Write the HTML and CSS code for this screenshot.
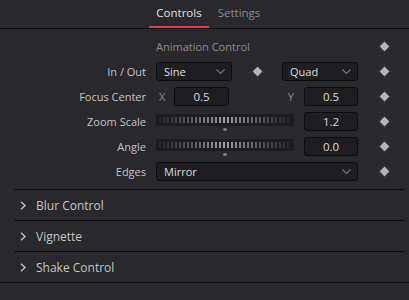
FILE: index.html
```html
<!DOCTYPE html>
<html>
<head>
<meta charset="utf-8">
<link rel="stylesheet" href="styles.css">
</head>
<body>
<div class="tabs">
  <div class="tab active">Controls</div>
  <div class="tab">Settings</div>
</div>
<div class="controls">
  <div class="row">
    <div class="label"></div>
    <div class="heading">Animation Control</div>
    <div class="key"><span class="diamond"></span></div>
  </div>
  <div class="row">
    <div class="label">In / Out</div>
    <div class="pair">
      <div class="select"><span>Sine</span><svg class="chev" width="9" height="6" viewBox="0 0 9 6"><polyline points="0.5,0.5 4.5,4.5 8.5,0.5"/></svg></div>
      <div class="key"><span class="diamond"></span></div>
      <div class="select"><span>Quad</span><svg class="chev" width="9" height="6" viewBox="0 0 9 6"><polyline points="0.5,0.5 4.5,4.5 8.5,0.5"/></svg></div>
    </div>
    <div class="key"><span class="diamond"></span></div>
  </div>
  <div class="row">
    <div class="label">Focus Center</div>
    <div class="xy">
      <div class="axis x">X</div>
      <div class="field">0.5</div>
      <div class="axis y">Y</div>
      <div class="field">0.5</div>
    </div>
    <div class="key"><span class="diamond"></span></div>
  </div>
  <div class="row">
    <div class="label">Zoom Scale</div>
    <div class="slide">
      <div class="slider"><div class="track"><div class="ticks"></div></div><div class="dot"></div></div>
      <div class="field">1.2</div>
    </div>
    <div class="key"><span class="diamond"></span></div>
  </div>
  <div class="row">
    <div class="label">Angle</div>
    <div class="slide">
      <div class="slider"><div class="track"><div class="ticks"></div></div><div class="dot"></div></div>
      <div class="field">0.0</div>
    </div>
    <div class="key"><span class="diamond"></span></div>
  </div>
  <div class="row">
    <div class="label">Edges</div>
    <div class="select"><span>Mirror</span><svg class="chev" width="9" height="6" viewBox="0 0 9 6"><polyline points="0.5,0.5 4.5,4.5 8.5,0.5"/></svg></div>
    <div class="key"><span class="diamond"></span></div>
  </div>
</div>
<div class="sections">
  <div class="section"><svg class="arrow" width="7" height="9" viewBox="0 0 7 9"><polyline points="1,0.8 5,4.5 1,8.2"/></svg><span>Blur Control</span></div>
  <div class="section"><svg class="arrow" width="7" height="9" viewBox="0 0 7 9"><polyline points="1,0.8 5,4.5 1,8.2"/></svg><span>Vignette</span></div>
  <div class="section"><svg class="arrow" width="7" height="9" viewBox="0 0 7 9"><polyline points="1,0.8 5,4.5 1,8.2"/></svg><span>Shake Control</span></div>
</div>
</body>
</html>
```

FILE: styles.css
```css
* { box-sizing: border-box; }
html, body {
  margin: 0;
  background: #28282d;
  height: 100%;
}
body {
  font-family: "Open Sans", "Noto Sans", sans-serif;
  font-size: 11px;
  color: #c4c4c4;
  overflow: hidden;
}
.tabs {
  display: flex;
  justify-content: center;
  padding-left: 9px;
  height: 29px;
  border-bottom: 1px solid #0e0e11;
}
.tab {
  width: 60px;
  height: 28px;
  line-height: 26px;
  text-align: center;
  color: #8c8c8f;
  font-size: 11.5px;
}
.tab.active {
  color: #e2e2e2;
  border-bottom: 2px solid #cf4a3c;
}
.controls {
  padding-top: 8px;
  display: flex;
  flex-direction: column;
  gap: 6px;
}
.row {
  display: grid;
  grid-template-columns: 146px 202px 32px;
  column-gap: 10px;
  height: 19px;
  align-items: center;
}
.label {
  text-align: right;
  color: #c4c4c6;
  line-height: 19px;
}
.heading {
  color: #8d8d90;
  line-height: 19px;
}
.key {
  display: flex;
  justify-content: center;
  align-items: center;
  height: 19px;
}
.diamond {
  width: 9px;
  height: 9px;
  background: #b4b4b6;
  border: 1px solid #141416;
  transform: rotate(45deg);
}
.pair {
  display: grid;
  grid-template-columns: 76px 1fr 76px;
  height: 19px;
}
.select {
  height: 19px;
  background: #1e1e21;
  border: 1px solid #0d0d0f;
  border-radius: 3px;
  display: flex;
  align-items: center;
  justify-content: space-between;
  padding: 0 6px 0 7px;
  color: #dcdcdc;
}
.chev {
  fill: none;
  stroke: #77777a;
  stroke-width: 1.1;
}
.xy {
  display: grid;
  grid-template-columns: 18px 55px 1fr 54px;
  height: 19px;
  align-items: center;
}
.axis {
  color: #8a8a8d;
  line-height: 19px;
}
.axis.x { padding-left: 3px; }
.axis.y { text-align: right; padding-right: 10px; }
.field {
  height: 19px;
  background: #1e1e21;
  border: 1px solid #0d0d0f;
  border-radius: 3px;
  text-align: center;
  line-height: 17px;
  color: #dadada;
  font-size: 11.5px;
}
.slide {
  display: grid;
  grid-template-columns: 138px 1fr;
  column-gap: 10px;
  height: 19px;
}
.slider {
  height: 19px;
  display: flex;
  flex-direction: column;
  align-items: center;
}
.track {
  margin-top: 2px;
  width: 100%;
  height: 14px;
  background: #1d1d20;
  display: flex;
  align-items: center;
  padding: 0 3px;
}
.ticks {
  width: 100%;
  height: 6px;
  background: repeating-linear-gradient(90deg, #a4a4a6 0 2px, transparent 2px 4px);
  -webkit-mask-image: linear-gradient(90deg, rgba(0,0,0,0.08) 0%, rgba(0,0,0,0.45) 25%, #000 50%, rgba(0,0,0,0.45) 75%, rgba(0,0,0,0.08) 100%);
  mask-image: linear-gradient(90deg, rgba(0,0,0,0.08) 0%, rgba(0,0,0,0.45) 25%, #000 50%, rgba(0,0,0,0.45) 75%, rgba(0,0,0,0.08) 100%);
}
.dot {
  margin-top: 2px;
  width: 4px;
  height: 4px;
  border-radius: 50%;
  background: #7a7a7d;
}
.sections {
  margin-top: 8px;
  border-bottom: 1px solid #0e0e11;
}
.section {
  margin: 0 4px 0 14px;
  height: 31px;
  border-top: 1px solid #0e0e11;
  display: flex;
  align-items: center;
  color: #c6c6c8;
  font-size: 12px;
}
.arrow {
  margin-left: 6px;
  margin-right: 9px;
  fill: none;
  stroke: #c0c0c2;
  stroke-width: 1.4;
}
```
